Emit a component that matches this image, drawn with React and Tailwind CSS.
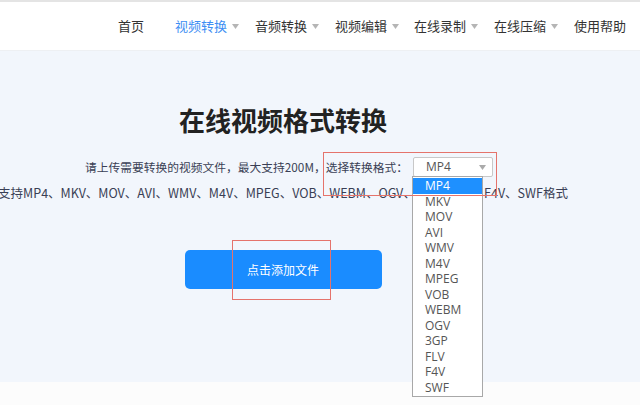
const navItems = [
  { label: "首页", width: "w-[57px]", arrow: false },
  { label: "视频转换", width: "w-[80px]", active: true, arrow: true },
  { label: "音频转换", width: "w-[80px]", arrow: true },
  { label: "视频编辑", width: "w-[79px]", arrow: true },
  { label: "在线录制", width: "w-[80px]", arrow: true },
  { label: "在线压缩", width: "w-[80px]", arrow: true },
  { label: "使用帮助", width: "w-[60px]", arrow: false },
];

const formats = ["MP4", "MKV", "MOV", "AVI", "WMV", "M4V", "MPEG", "VOB", "WEBM", "OGV", "3GP", "FLV", "F4V", "SWF"];

const cjk = { fontFamily: '"Noto Sans CJK SC", "Noto Sans", sans-serif' };
const latin = { fontFamily: '"Open Sans", "Noto Sans CJK SC", sans-serif' };

function Caret({ className }) {
  return (
    <svg width="7" height="5" viewBox="0 0 7 5" className={className}>
      <path d="M0 0 L7 0 L3.5 5 Z" fill="currentColor" />
    </svg>
  );
}

export default function App() {
  return (
    <div className="relative w-[640px] h-[405px] overflow-hidden bg-[#fcfcfc]" style={cjk}>
      {/* top nav */}
      <header className="h-[50px] bg-white border-t-2 border-[#e4e4e4] flex items-center pl-[118px] text-[13px] text-[#333] whitespace-nowrap">
        {navItems.map((item) => (
          <div
            key={item.label}
            className={`${item.width} shrink-0 flex items-center gap-[5px] ${item.active ? "text-[#3d8ef3]" : ""}`}
          >
            <span>{item.label}</span>
            {item.arrow && <Caret className="text-[#b5b5b5]" />}
          </div>
        ))}
      </header>

      {/* main */}
      <main className="h-[332px] bg-[#f2f6fc] border-t border-[#eef0f3]">
        <div className="w-[566px] flex flex-col items-center pt-[52px]">
          <h1 className="text-[26px] leading-[34px] font-bold text-[#222]">在线视频格式转换</h1>

          <div className="mt-[20px] flex items-center h-[20px] pl-[12px] text-[11.75px] text-[#3a3f55] whitespace-nowrap">
            <span>请上传需要转换的视频文件，最大支持200M，选择转换格式：</span>
            <div
              className="ml-[5px] w-[80px] h-[20px] shrink-0 border border-[#c8c8c8] rounded-[2px] bg-white flex items-center justify-between pl-[12px] pr-[6px] text-[12px] text-[#555]"
              style={latin}
            >
              <span>MP4</span>
              <Caret className="text-[#aaa]" />
            </div>
          </div>

          <div className="mt-[7px] w-full flex justify-center">
            <p className="whitespace-nowrap text-[12.5px] leading-[18px] text-[#3a3f55]">
              支持MP4、MKV、MOV、AVI、WMV、M4V、MPEG、VOB、WEBM、OGV、3GP、FLV、F4V、SWF格式
            </p>
          </div>

          <button className="mt-[48px] w-[197px] h-[39px] rounded-[5px] bg-[#1a8cff] text-white text-[12px]">
            点击添加文件
          </button>
        </div>
      </main>

      {/* open select list */}
      <ul
        className="absolute left-[412px] top-[176px] w-[71px] border border-[#a8a8a8] bg-white text-[12px] text-[#555] py-[1px]"
        style={latin}
      >
        {formats.map((f, i) => (
          <li
            key={f}
            className={`h-[15.5px] leading-[15.5px] pl-[12px] ${i === 0 ? "bg-[#1e90ff] text-white" : ""}`}
          >
            {f}
          </li>
        ))}
      </ul>

      {/* annotation boxes */}
      <div className="absolute left-[323px] top-[152px] w-[174px] h-[44px] border-[1.5px] border-[#e5736b]" />
      <div className="absolute left-[232px] top-[240px] w-[99px] h-[60px] border-[1.5px] border-[#e5736b]" />
    </div>
  );
}
